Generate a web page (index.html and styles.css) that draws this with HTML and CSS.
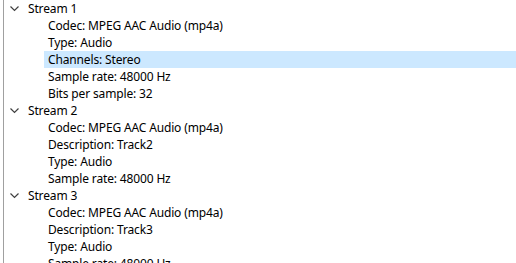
FILE: index.html
```html
<!DOCTYPE html>
<html lang="en">
<head>
  <meta charset="UTF-8" />
  <title>Streams</title>
  <link rel="stylesheet" href="styles.css">
</head>
<body>
  <div class="tree">
    <div class="node">
      <div class="row parent"><span class="chev"><svg width="9" height="6" viewBox="0 0 9 6"><path d="M0.5 0.5 L4.5 4.5 L8.5 0.5" fill="none" stroke="#404040" stroke-width="1.2"/></svg></span>Stream 1</div>
      <div class="row child">Codec: MPEG AAC Audio (mp4a)</div>
      <div class="row child">Type: Audio</div>
      <div class="row child selected">Channels: Stereo</div>
      <div class="row child">Sample rate: 48000 Hz</div>
      <div class="row child">Bits per sample: 32</div>
    </div>
    <div class="node">
      <div class="row parent"><span class="chev"><svg width="9" height="6" viewBox="0 0 9 6"><path d="M0.5 0.5 L4.5 4.5 L8.5 0.5" fill="none" stroke="#404040" stroke-width="1.2"/></svg></span>Stream 2</div>
      <div class="row child">Codec: MPEG AAC Audio (mp4a)</div>
      <div class="row child">Description: Track2</div>
      <div class="row child">Type: Audio</div>
      <div class="row child">Sample rate: 48000 Hz</div>
    </div>
    <div class="node">
      <div class="row parent"><span class="chev"><svg width="9" height="6" viewBox="0 0 9 6"><path d="M0.5 0.5 L4.5 4.5 L8.5 0.5" fill="none" stroke="#404040" stroke-width="1.2"/></svg></span>Stream 3</div>
      <div class="row child">Codec: MPEG AAC Audio (mp4a)</div>
      <div class="row child">Description: Track3</div>
      <div class="row child">Type: Audio</div>
      <div class="row child">Sample rate: 48000 Hz</div>
    </div>
  </div>
</body>
</html>
```

FILE: styles.css
```css
body {
  margin: 0;
  background: white;
  font-family: "Noto Sans", sans-serif;
  font-size: 12px;
  letter-spacing: -0.15px;
  color: black;
  overflow: hidden;
}
.tree {
  margin-left: 3px;
  border-left: 1px solid #a0a0a0;
  height: 263px;
}
.row {
  height: 17px;
  line-height: 17px;
  white-space: nowrap;
}
.parent {
  display: flex;
  align-items: center;
  padding-left: 6px;
}
.chev {
  width: 18px;
  display: flex;
  align-items: center;
}
.child {
  margin-left: 40px;
  padding-left: 4px;
}
.selected {
  background: #cce8ff;
}
```
